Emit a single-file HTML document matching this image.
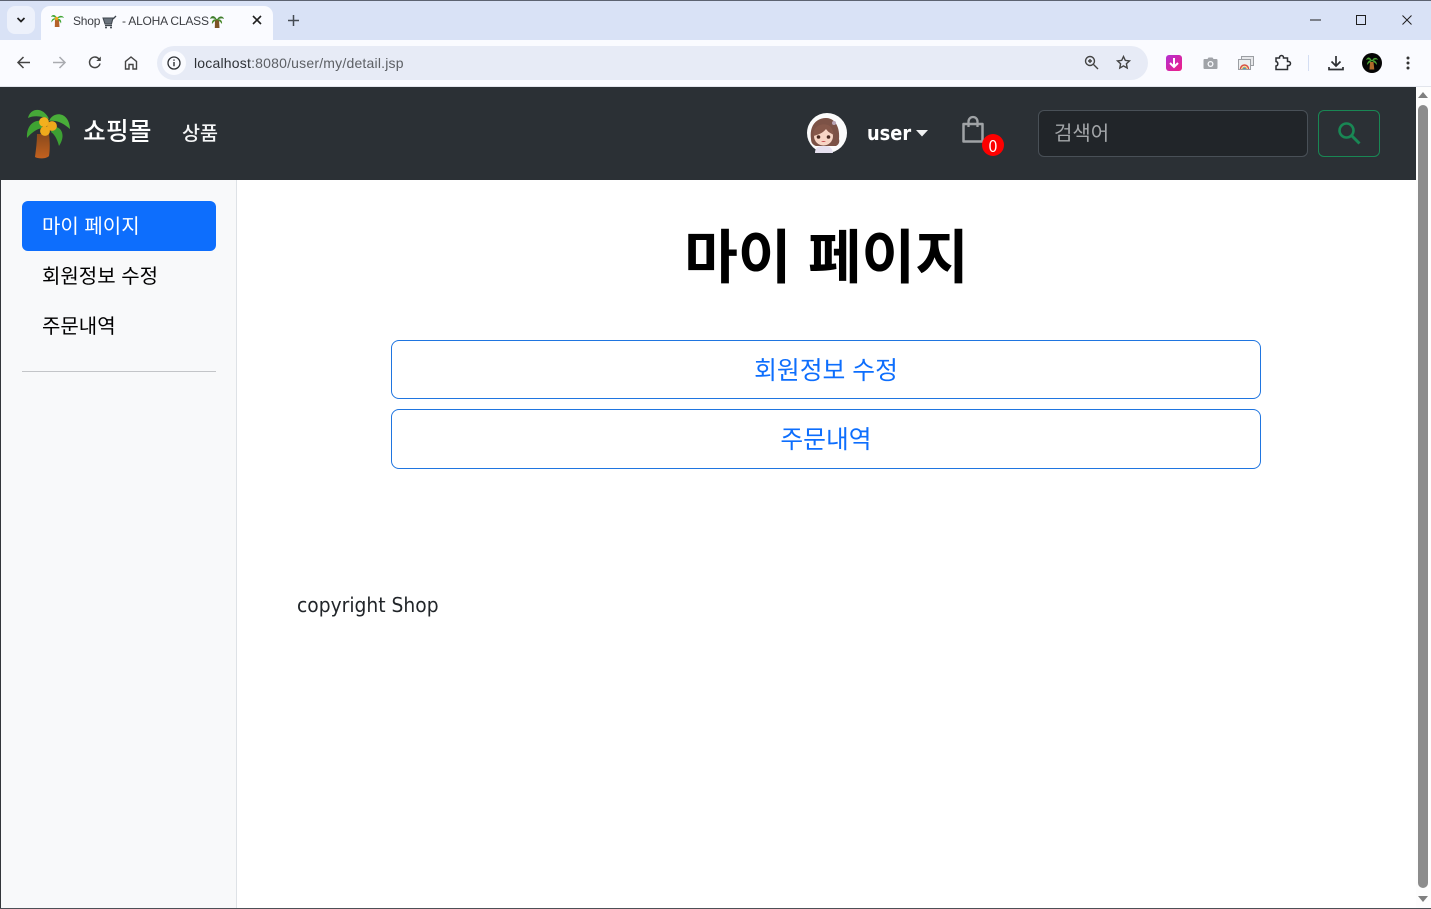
<!DOCTYPE html>
<html lang="ko"><head><meta charset="utf-8"><title>Shop - ALOHA CLASS</title>
<style>
*{box-sizing:border-box}
html,body{margin:0;padding:0;width:1431px;height:909px;overflow:hidden;background:#fff}
body{position:relative;font-family:"Liberation Sans","Noto Sans CJK KR",sans-serif}
.a{position:absolute;white-space:nowrap;line-height:1}
.k{font-family:"Noto Sans CJK KR","Liberation Sans",sans-serif}
svg{position:absolute;overflow:visible}
.btn{position:absolute;left:391px;width:870px;border:1px solid #1f75e0;border-radius:8px;background:#fff;color:#0d6efd;text-align:center;font:400 24.8px "Noto Sans CJK KR",sans-serif}
</style></head><body>
<!-- browser chrome -->
<div class="a" style="left:0;top:0;width:1431px;height:40px;background:#d9e2f6;border-top:1px solid #5d6371"></div>
<div class="a" style="left:7px;top:6px;width:28px;height:28px;border-radius:8px;background:#edf1fb"></div>
<svg style="left:16px;top:16px" width="10" height="8" viewBox="0 0 10 8"><path d="M1.5 2l3.5 3.5L8.500 2" fill="none" stroke="#1f1f1f" stroke-width="1.700"/></svg>
<div class="a" style="left:41px;top:6px;width:232px;height:34px;border-radius:9px 9px 0 0;background:#fafbff"></div>
<svg style="left:50px;top:13px" width="15" height="15" viewBox="0 0 15 15"><path d="M5 6.500h4L9.500 14H4.800Z" fill="#b5622a"/><path d="M7 6C6 1 2 1 1 4c2-1 3 0 6 2ZM7 6c1-4 6-4 7-1-2-1-4-1-7 1ZM7 6C4 4 1 6 1.500 9.500 3 7 4 6.500 7 6ZM7 6c3-1 5 2 4 4.500C10 8.500 9 7.500 7 6Z" fill="#43a637"/><circle cx="6.500" cy="5.500" r="1.700" fill="#e8a91c"/></svg>
<div class="a" style="left:73px;top:15px;font-size:12px;color:#3b3d42;letter-spacing:-.2px">Shop</div>
<svg style="left:102px;top:15px" width="15" height="14" viewBox="0 0 15 14"><path d="M1 3h10l-1.500 6H3Z" fill="#6a737d" stroke="#3d444c"/><path d="M3 10.500h7M11 4l3-3" stroke="#3d444c" stroke-width="1.300"/><circle cx="4" cy="12.500" r="1" fill="#3d444c"/><circle cx="9" cy="12.500" r="1" fill="#3d444c"/></svg>
<div class="a" style="left:122px;top:15px;font-size:12px;color:#3b3d42;letter-spacing:-.2px">- ALOHA CLASS</div>
<svg style="left:210px;top:14px" width="14" height="14" viewBox="0 0 14 14"><path d="M5 6h4L9.500 14H4.800Z" fill="#7d5426"/><path d="M7 6C5 1 1 1 0 5c2-1 4-1 7 1ZM7 6c1-4 6-5 7-1-2-1-4-1-7 1Z" fill="#3f7d2c"/><path d="M7 5C3 5 1.500 7 2 10c1.500-2 3-3.500 5-4ZM7 5c4 0 5.500 2 5 5C10.500 8 9 6.500 7 6Z" fill="#4b8a2d"/></svg>
<svg style="left:252px;top:15px" width="10" height="10" viewBox="0 0 10 10"><path d="M1 1l8 8M9 1L1 9" stroke="#1f1f1f" stroke-width="1.600"/></svg>
<svg style="left:288px;top:15px" width="11" height="11" viewBox="0 0 11 11"><path d="M5.500 0v11M0 5.500h11" stroke="#444a52" stroke-width="1.500"/></svg>
<svg style="left:1310px;top:19px" width="11" height="2"><path d="M0 1h11" stroke="#1f1f1f"/></svg>
<svg style="left:1356px;top:15px" width="10" height="10"><rect x=".5" y=".5" width="9" height="9" fill="none" stroke="#1f1f1f"/></svg>
<svg style="left:1402px;top:15px" width="10" height="10"><path d="M.5.500l9 9M9.500.500l-9 9" stroke="#1f1f1f"/></svg>

<div class="a" style="left:0;top:40px;width:1431px;height:47px;background:#fafbff;border-bottom:1px solid #e2e5ec"></div>
<svg style="left:16px;top:55px" width="15" height="15" viewBox="0 0 15 15"><path d="M14 7.500H2M7.500 2L2 7.500 7.500 13" fill="none" stroke="#444" stroke-width="1.500"/></svg>
<svg style="left:52px;top:55px" width="15" height="15" viewBox="0 0 15 15"><path d="M1 7.500h12M7.500 2L13 7.500 7.500 13" fill="none" stroke="#a9abb0" stroke-width="1.500"/></svg>
<svg style="left:88px;top:55px" width="14" height="15" viewBox="0 0 14 15"><path d="M12 8.500A5.300 5.300 0 1 1 10.500 3.500L12 5" fill="none" stroke="#444" stroke-width="1.500"/><path d="M12.800 1.500v4.500H8.300Z" fill="#444"/></svg>
<svg style="left:124px;top:56px" width="14" height="14" viewBox="0 0 14 14"><path d="M1.500 13V5.500L7 1l5.500 4.500V13H9V8.500H5V13Z" fill="none" stroke="#444" stroke-width="1.400"/></svg>
<div class="a" style="left:157px;top:46px;width:991px;height:34px;border-radius:17px;background:#e7ebf6"></div>
<div class="a" style="left:162px;top:51px;width:24px;height:24px;border-radius:12px;background:#fafbff"></div>
<svg style="left:167px;top:56px" width="14" height="14" viewBox="0 0 14 14"><circle cx="7" cy="7" r="6" fill="none" stroke="#2c2f33" stroke-width="1.300"/><path d="M7 6v4.200M7 3.500v1.300" stroke="#2c2f33" stroke-width="1.400"/></svg>
<div class="a" style="left:194px;top:56px;font-size:14px;color:#2f3237;letter-spacing:.2px">localhost<span style="color:#5d6065">:8080/user/my/detail.jsp</span></div>
<svg style="left:1084px;top:55px" width="15" height="15" viewBox="0 0 15 15"><circle cx="6" cy="6" r="4.500" fill="none" stroke="#444" stroke-width="1.400"/><path d="M9.500 9.500L14 14M4 6h4M6 4v4" stroke="#444" stroke-width="1.400"/></svg>
<svg style="left:1116px;top:55px" width="15" height="15" viewBox="0 0 15 15"><path d="M7.500 1.500l1.800 3.900 4.200.5-3.100 2.900.8 4.200-3.700-2.100-3.700 2.100.8-4.200L1.500 5.900l4.200-.5Z" fill="none" stroke="#444" stroke-width="1.400"/></svg>
<svg style="left:1166px;top:55px" width="16" height="16" viewBox="0 0 16 16"><defs><linearGradient id="g" x1="0" y1="0" x2="1" y2="1"><stop offset="0" stop-color="#b42fd2"/><stop offset="1" stop-color="#ef1f84"/></linearGradient></defs><rect width="16" height="16" rx="3" fill="url(#g)"/><path d="M8 3v9M4 8l4 4 4-4" fill="none" stroke="#fff" stroke-width="2"/></svg>
<svg style="left:1203px;top:56px" width="15" height="14" viewBox="0 0 15 14"><path d="M1.500 3H4.500L5.500 1.500h4L10.500 3H13.500A1 1 0 0 1 14.500 4V12a1 1 0 0 1-1 1H1.500a1 1 0 0 1-1-1V4a1 1 0 0 1 1-1Z" fill="#a0a3a8"/><circle cx="7.500" cy="8" r="3" fill="#fafbff"/><circle cx="7.500" cy="8" r="1.700" fill="#a0a3a8"/></svg>
<svg style="left:1238px;top:56px" width="16" height="14" viewBox="0 0 16 14"><rect x="3.500" y=".5" width="12" height="9" fill="#e6e7ea" stroke="#9b9ea3"/><rect x=".5" y="3.500" width="12" height="10" fill="#eceef0" stroke="#9b9ea3"/><path d="M2.500 13a4 4 0 0 1 8 0" fill="none" stroke="#d9503f" stroke-width="1.500"/><path d="M4.500 13a2 2 0 0 1 4 0" fill="#3f8fdc" stroke="#e8b93a"/></svg>
<svg style="left:1275px;top:55px" width="16" height="16" viewBox="0 0 16 16"><path d="M1 3H4.500V2.500a2 2 0 0 1 4 0V3H12.500V6.500H13.500a2 2 0 0 1 0 4H12.500V14.500H1V11a2.300 2.300 0 0 0 0-4.500Z" fill="none" stroke="#2d2f33" stroke-width="1.500"/></svg>
<div class="a" style="left:1308px;top:55px;width:1px;height:16px;background:#d4def3"></div>
<svg style="left:1328px;top:55px" width="16" height="16" viewBox="0 0 16 16"><path d="M8 1v9.500M3.500 6.500L8 11l4.500-4.500M1 12v2.500h14V12" fill="none" stroke="#2d2f33" stroke-width="1.700"/></svg>
<div class="a" style="left:1362px;top:53px;width:20px;height:20px;border-radius:50%;background:#050505"></div>
<svg style="left:1365px;top:55px" width="14" height="16" viewBox="0 0 14 16"><path d="M5 7h3.500l.8 7.500H4.500Z" fill="#b06a2a"/><path d="M7 6C5 1 2 2 1 5c2-1 3-1 6 1ZM7 6c1-4 5-4 6-1-2-1-3-1-6 1ZM7 5c-3 0-5 2-5 5 2-2 3-3 5-4ZM7 5c3 0 5 2 5 5-2-2-3-3-5-4Z" fill="#4ca736"/></svg>
<svg style="left:1406px;top:55px" width="4" height="16" viewBox="0 0 4 16"><circle cx="2" cy="3" r="1.500" fill="#333"/><circle cx="2" cy="8" r="1.500" fill="#333"/><circle cx="2" cy="13" r="1.500" fill="#333"/></svg>

<!-- navbar -->
<div class="a" style="left:0;top:87px;width:1416px;height:93px;background:#2b3035"></div>
<svg style="left:25px;top:107px" width="46" height="52" viewBox="0 0 46 52">
<defs><linearGradient id="t" x1="0" y1="0" x2="0" y2="1"><stop offset="0" stop-color="#8a4a1c"/><stop offset="1" stop-color="#c2611f"/></linearGradient></defs>
<path d="M12 27h12c1 8 1 16 0 22-3 3-11 3-14 1 1-8 2-15 2-23Z" fill="url(#t)"/>
<path d="M3 11C5 1 18-1 24 12C17 9 9 8 3 11Z" fill="#46a838"/>
<path d="M24 14C28 4 44 4 45 22C37 15 30 13 24 14Z" fill="#49ad39"/>
<path d="M17 14C8 12 1 20 2 31C7 25 12 22 17 21Z" fill="#3ea332"/>
<path d="M27 20C35 18 42 27 34 39C32 31 29 27 26 25Z" fill="#3da033"/>
<circle cx="19" cy="15" r="4.900" fill="#f2b01e"/><circle cx="27" cy="19" r="4.900" fill="#eea81c"/><circle cx="20" cy="24" r="4.900" fill="#efaa1c"/>
</svg>
<div class="a k" style="left:83px;top:116px;font-size:24.8px;color:#fff;font-weight:500;line-height:28px">쇼핑몰</div>
<div class="a k" style="left:182px;top:118px;font-size:19.6px;color:#f4f5f6;font-weight:500;line-height:27px">상품</div>

<svg style="left:807px;top:113px" width="40" height="40" viewBox="0 0 40 40">
<circle cx="20" cy="20" r="20" fill="#fbfbfb"/>
<path d="M4 26C2 12 10 5 19 5c9 0 14 9 13 21 1 4-1 6-3 7H9c-3-1-5-3-5-7Z" fill="#7c5246"/>
<ellipse cx="16.500" cy="23" rx="9.500" ry="9.500" fill="#f7d5c5"/>
<path d="M6 23C6 13 14 10 21 12c3 1 5 5 6 10-4-2-6-3-8-6-3 4-8 6-13 7Z" fill="#86584a"/>
<circle cx="11.500" cy="24" r="1.800" fill="#4b2b22"/><circle cx="21.500" cy="24" r="1.800" fill="#4b2b22"/>
<path d="M14 28q2.500 2 5 0" fill="#c8494f"/>
<circle cx="27" cy="10" r="2" fill="#b9a4b5"/>
<path d="M8 40c0-6 4-7 9-7s8 1 9 7Z" fill="#e6e0ef"/>
</svg>
<div class="a" style="left:867px;top:119px;font-family:'DejaVu Sans',sans-serif;font-size:20px;font-weight:700;color:#fff;line-height:28px;transform:scaleX(.89);transform-origin:0 0">user</div>
<svg style="left:916px;top:130px" width="12" height="7"><path d="M0 0h12L6 6.500Z" fill="#f0f1f2"/></svg>
<svg style="left:962px;top:116px" width="22" height="27" viewBox="0 0 22 27"><path d="M1.500 8h19v17.500h-19Z" fill="none" stroke="#a0a3a6" stroke-width="2.500" stroke-linejoin="round"/><path d="M6.500 11V5.500a4.500 4.500 0 0 1 9 0V11" fill="none" stroke="#a0a3a6" stroke-width="2.300"/></svg>
<div class="a k" style="left:982px;top:134px;width:22px;height:22px;border-radius:50%;background:#fd0000;color:#fff;font-size:16px;text-align:center;line-height:22px">0</div>

<div class="a" style="left:1038px;top:110px;width:270px;height:47px;border:1px solid #495057;border-radius:6px;background:#212529"></div>
<div class="a k" style="left:1054px;top:118px;font-size:20px;color:#a3a6a9;line-height:27px">검색어</div>
<div class="a" style="left:1318px;top:110px;width:62px;height:47px;border:1px solid #198754;border-radius:6px"></div>
<svg style="left:1337px;top:121px" width="24" height="24" viewBox="0 0 24 24"><circle cx="9.500" cy="9.500" r="7" fill="none" stroke="#198754" stroke-width="2.600"/><path d="M14.500 14.500l8 8" stroke="#198754" stroke-width="3"/></svg>

<!-- sidebar -->
<div class="a" style="left:0;top:180px;width:237px;height:729px;background:#f8f9fa;border-right:1px solid #dee2e6;border-left:1px solid #33363a"></div>
<div class="a" style="left:22px;top:201px;width:194px;height:50px;border-radius:6px;background:#0d6efd"></div>
<div class="a k" style="left:42px;top:211px;font-size:20px;color:#fff;line-height:27px">마이 페이지</div>
<div class="a k" style="left:42px;top:261px;font-size:20px;color:#000;line-height:27px">회원정보 수정</div>
<div class="a k" style="left:42px;top:311px;font-size:20px;color:#000;line-height:27px">주문내역</div>
<div class="a" style="left:22px;top:371px;width:194px;height:1px;background:#c3c5c8"></div>

<!-- main -->
<div class="a k" style="left:237px;top:209px;width:1179px;text-align:center;font-size:58.3px;font-weight:700;color:#000;line-height:87px">마이 페이지</div>
<div class="btn" style="top:340px;height:59px;line-height:57px">회원정보 수정</div>
<div class="btn" style="top:409px;height:60px;line-height:56px">주문내역</div>
<div class="a" style="left:297px;top:591px;font-family:'DejaVu Sans',sans-serif;font-size:20px;color:#212529;line-height:28px;transform:scaleX(.935);transform-origin:0 0">copyright Shop</div>

<!-- scrollbar -->
<div class="a" style="left:1416px;top:87px;width:15px;height:822px;background:#fdfdfd"></div>
<svg style="left:1418px;top:92px" width="10" height="7"><path d="M5 0l5 6H0Z" fill="#7f7f7f"/></svg>
<div class="a" style="left:1418px;top:105px;width:10px;height:783px;border-radius:5px;background:#8c8c8c"></div>
<svg style="left:1418px;top:896px" width="10" height="7"><path d="M0 0h10L5 6Z" fill="#7f7f7f"/></svg>
<div class="a" style="left:0;top:908px;width:1431px;height:1px;background:#4d5056"></div>
</body></html>
